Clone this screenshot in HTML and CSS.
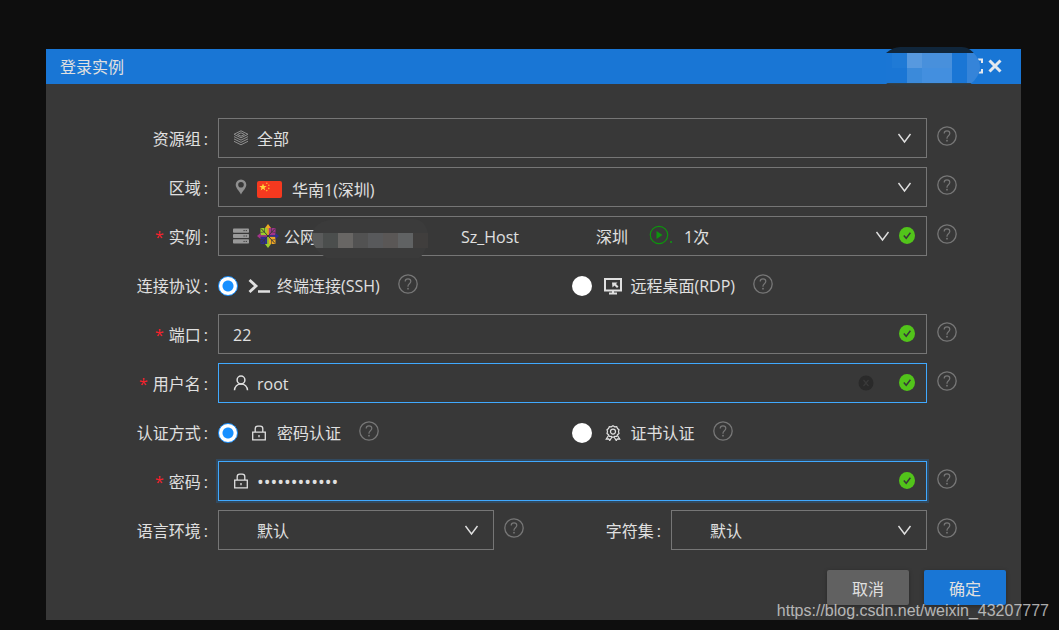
FILE: index.html
```html
<!DOCTYPE html>
<html lang="zh-CN">
<head>
<meta charset="utf-8">
<meta name="viewport" content="width=device-width, initial-scale=1">
<title>登录实例</title>
<link rel="stylesheet" href="styles.css">
</head>
<body>
<svg class="sprite" width="0" height="0" aria-hidden="true">
  <symbol id="help" viewBox="0 0 20 20"><g fill="none" stroke="currentColor"><circle cx="10" cy="10" r="9.200" stroke-width="1.300"/><path d="M7.200 7.600C7.200 5.800 8.400 4.900 10 4.900s2.800 1 2.800 2.600c0 2.200-2.800 2.300-2.800 4.600v.6" stroke-width="1.200"/></g><circle cx="10" cy="14.700" r=".9" fill="currentColor"/></symbol>
  <symbol id="chevron" viewBox="0 0 20 20"><path d="M3.500 6l6 8 6-8" fill="none" stroke="currentColor" stroke-width="1.400"/></symbol>
  <symbol id="check" viewBox="0 0 16 17"><ellipse cx="8" cy="8.500" rx="8" ry="8.500" fill="#52c41a"/><path d="M4.800 8.500l2.400 2.800 4.200-5.600" fill="none" stroke="#383838" stroke-width="1.500"/></symbol>
  <symbol id="lock" viewBox="0 0 16 16"><path d="M1.700 7.200h12.600v7.600H1.700zM4.200 7V3.800C4.200 2.200 5.200 1.200 6.800 1.200h2.400c1.600 0 2.600 1 2.600 2.600V7M8 10v2.200" fill="none" stroke="currentColor" stroke-width="1.300"/></symbol>
</svg>

<main class="dialog">
  <header class="titlebar">
    <h1 class="title">登录实例</h1>
    <div class="tools">
      <button class="tool" type="button" aria-label="全屏"><svg width="16" height="16" viewBox="0 0 16 16"><path d="M1 5V1.500h4M11 1.500h4V5M15 11v3.500h-4M5 14.500H1V11" fill="none" stroke="currentColor" stroke-width="2"/></svg></button>
      <button class="tool" type="button" aria-label="关闭"><svg width="14" height="14" viewBox="0 0 14 14"><path d="M1.500 1.500l11 11M12.500 1.500l-11 11" stroke="currentColor" stroke-width="3"/></svg></button>
    </div>
    <svg class="title-mask" width="94" height="40" viewBox="0 0 94 40" aria-hidden="true">
      <clipPath id="tm"><path d="M0 6Q7 0 14 0H76C85 0 94 11 94 20S85 40 76 40H14Q5 40 0 36z"/></clipPath>
      <g clip-path="url(#tm)"><path fill="#10263b" d="M0 0h94v6H0z"/><path fill="#1a76d5" d="M0 6h94v30H0z"/><path fill="#1f7ad6" d="M6 6h15v15H6z"/><path fill="#5799df" d="M21 6h15v15H21z"/><path fill="#4890dc" d="M36 6h30v15H36z"/><path fill="#3b8ada" d="M21 21h15v15H21z"/><path fill="#438fdf" d="M36 21h30v15H36z"/><path fill="#3584d9" d="M81 6h13v30H81z"/><path fill="#31424d" d="M0 36h94v1H0z"/><path fill="#353a3d" d="M0 37h94v3H0z"/></g>
    </svg>
  </header>

  <form class="form">
    <div class="row">
      <label class="label" for="group">资源组<i>:</i></label>
      <div class="field">
        <select class="control with-icon" id="group"><option>全部</option></select>
        <div class="deco">
          <svg class="dim" width="16" height="16" viewBox="0 0 16 16"><g fill="none" stroke="currentColor" stroke-width="1"><path d="M8 .8l7 3.500-7 3.500-7-3.500z"/><path d="M8 2.800l3.500 1.700L8 6.200 4.500 4.500zM1 6.600l7 3.500 7-3.500M1 8.900l7 3.500 7-3.500M1 11.300l7 3.500 7-3.500"/></g></svg>
          <svg class="suffix" width="20" height="20"><use href="#chevron"/></svg>
        </div>
      </div>
      <svg class="help" width="20" height="20"><use href="#help"/></svg>
    </div>

    <div class="row">
      <label class="label" for="region">区域<i>:</i></label>
      <div class="field">
        <select class="control with-flag" id="region"><option>华南1(深圳)</option></select>
        <div class="deco">
          <svg class="dim" width="16" height="16" viewBox="0 0 16 16"><path fill="currentColor" fill-rule="evenodd" d="M8 .5a5.300 5.300 0 0 1 5.300 5.300c0 3.200-3.300 5.900-5.300 9.700C6 11.700 2.700 9 2.700 5.800A5.300 5.300 0 0 1 8 .5zM8 3a2.800 2.800 0 1 0 0 5.600A2.800 2.800 0 0 0 8 3z"/></svg>
          <svg class="flag" width="25" height="17" viewBox="0 0 25 17"><rect width="25" height="17" rx="2" fill="#f5391f"/><path fill="#ffd43b" d="M6 2.500l1 2.600h2.700L7.500 6.800l.8 2.600L6 7.800 3.700 9.400l.8-2.600-2.200-1.700H5z"/><g fill="#ffb52e"><circle cx="9.800" cy="2.200" r=".8"/><circle cx="11.800" cy="4.200" r=".8"/><circle cx="11.800" cy="7.400" r=".8"/><circle cx="9.800" cy="9.600" r=".8"/></g></svg>
          <svg class="suffix" width="20" height="20"><use href="#chevron"/></svg>
        </div>
      </div>
      <svg class="help" width="20" height="20"><use href="#help"/></svg>
    </div>

    <div class="row">
      <label class="label" for="instance"><b>*</b>实例<i>:</i></label>
      <div class="field">
        <select class="control with-logo" id="instance"><option>公网</option></select>
        <div class="meta"><span class="host">Sz_Host</span><span class="city">深圳</span><span class="state"><svg width="20" height="20" viewBox="0 0 20 20"><circle cx="10" cy="10" r="8.700" fill="none" stroke="currentColor" stroke-width="1.200"/><path fill="currentColor" d="M7.500 6v8l6-4z"/></svg>.</span><span>1次</span></div>
        <div class="deco">
          <svg class="server" width="16" height="16" viewBox="0 0 16 16"><g fill="currentColor"><rect y=".5" width="16" height="4.200" rx=".8"/><rect y="5.900" width="16" height="4.200" rx=".8"/><rect y="11.300" width="16" height="4.200" rx=".8"/></g><path d="M10.500 2.600h3.500M10.500 8h3.500M10.500 13.400h3.500" stroke="#383838" stroke-dasharray="1.200 1"/></svg>
          <svg class="centos" width="22" height="24" viewBox="0 0 22 24"><path fill="#9ccd2a" d="M3.500 4H10.500v7.500h-7z"/><path fill="#a3338a" d="M11.500 4h7v7.500h-7z"/><path fill="#2f2d8c" d="M3.500 12.500h7V20h-7z"/><path fill="#efa724" d="M11.500 12.500h7V20h-7z"/><path d="M4 4.500l14 15M18 4.500l-14 15" stroke="#383838" stroke-width="1"/><path d="M7.500 4v4l-4 .5M14.500 4v4l4 .5M7.500 20v-4l-4-.5M14.500 20v-4l4-.5" fill="none" stroke="#383838" stroke-width=".6"/><path fill="#efa724" d="M11 0l3 4h-2.200v7h-1.600V4H8z"/><path fill="#9ccd2a" d="M11 24l3-4h-2.200v-7h-1.600v7H8z"/><path fill="#a3338a" d="M0 12l3.500-3v2.200H10v1.600H3.500V15z"/><path fill="#2f2d8c" d="M22 12l-3.500-3v2.200H12v1.600h6.500V15z"/></svg>
          <svg class="suffix" width="20" height="20"><use href="#chevron"/></svg>
          <svg class="ok" width="16" height="17"><use href="#check"/></svg>
        </div>
        <svg class="name-mask" width="127" height="40" viewBox="0 0 127 40" aria-hidden="true"><path fill="#3b3b3b" d="M10 4Q18 1 30 1h72c8 0 14 8 14 16s-2 18-9 23H15C6 35 0 28 0 17q1-8 10-13z"/><path fill="#5a5b5b" d="M0 15h11v15H4Q0 26 0 15z"/><path fill="#4b4e4d" d="M11 15h15v15H11z"/><path fill="#686664" d="M26 15h15v15H26z"/><path fill="#525252" d="M41 15h15v15H41z"/><path fill="#58595b" d="M56 15h15v15H56z"/><path fill="#5a5756" d="M71 15h15v15H71z"/><path fill="#606263" d="M86 15h15v15H86z"/><path fill="#403e3d" d="M101 15h15v15h-15z"/></svg>
      </div>
      <svg class="help" width="20" height="20"><use href="#help"/></svg>
    </div>

    <div class="row" role="radiogroup" aria-labelledby="proto">
      <span class="label" id="proto">连接协议<i>:</i></span>
      <div class="choices">
        <div class="choice">
          <input type="radio" name="proto" id="ssh" checked>
          <label for="ssh"><svg width="22" height="18" viewBox="0 0 22 18"><path d="M1.500 3l6.500 6-6.500 6" fill="none" stroke="currentColor" stroke-width="2.800"/><path d="M10 14.500h12" stroke="currentColor" stroke-width="2.500"/></svg>终端连接(SSH)</label>
          <svg class="help" width="20" height="20"><use href="#help"/></svg>
        </div>
        <div class="choice">
          <input type="radio" name="proto" id="rdp">
          <label for="rdp"><svg width="22" height="18" viewBox="0 0 22 18"><path d="M3 2h16v11.500H3z" fill="none" stroke="currentColor" stroke-width="2"/><path d="M7 16.500h8M11 13v4" stroke="currentColor" stroke-width="2"/><path fill="currentColor" d="M10 5.500h5.500L14 7l2.500 2.500-1.500 1.500-2.500-2.500-2 2z"/></svg>远程桌面(RDP)</label>
          <svg class="help" width="20" height="20"><use href="#help"/></svg>
        </div>
      </div>
    </div>

    <div class="row">
      <label class="label" for="port"><b>*</b>端口<i>:</i></label>
      <div class="field">
        <input class="control" id="port" type="text" value="22">
        <div class="deco"><svg class="suffix" width="16" height="17"><use href="#check"/></svg></div>
      </div>
      <svg class="help" width="20" height="20"><use href="#help"/></svg>
    </div>

    <div class="row">
      <label class="label" for="user"><b>*</b>用户名<i>:</i></label>
      <div class="field">
        <input class="control with-icon active" id="user" type="text" value="root">
        <div class="deco">
          <svg width="16" height="16" viewBox="0 0 16 16"><g fill="none" stroke="currentColor" stroke-width="1.500"><circle cx="8" cy="5" r="3.900"/><path d="M1.500 15.300C1.700 11.500 4.300 8.900 8 8.900s6.300 2.600 6.500 6.400"/></g></svg>
          <svg class="suffix clear" width="16" height="16" viewBox="0 0 16 16"><circle cx="8" cy="8" r="7.500" fill="#2a2a2a"/><path d="M5.500 5l5 6M10.500 5l-5 6" stroke="#3a3a3a" stroke-width="1.200"/></svg>
          <svg width="16" height="17"><use href="#check"/></svg>
        </div>
      </div>
      <svg class="help" width="20" height="20"><use href="#help"/></svg>
    </div>

    <div class="row" role="radiogroup" aria-labelledby="auth">
      <span class="label" id="auth">认证方式<i>:</i></span>
      <div class="choices">
        <div class="choice">
          <input type="radio" name="auth" id="pwd-auth" checked>
          <label for="pwd-auth"><svg width="22" height="16"><use href="#lock"/></svg>密码认证</label>
          <svg class="help" width="20" height="20"><use href="#help"/></svg>
        </div>
        <div class="choice">
          <input type="radio" name="auth" id="cert-auth">
          <label for="cert-auth"><svg width="22" height="16" viewBox="0 0 16 16"><g fill="none" stroke="currentColor" stroke-width="1.200"><path d="M8 .8l1.700 1 2-.1.800 1.800 1.500 1.200-.5 1.900.5 1.900-1.500 1.200-.8 1.800-2-.1-1.700 1-1.700-1-2 .1-.8-1.800L2 8.500l.5-1.900L2 4.700l1.500-1.200.8-1.800 2 .1z"/><circle cx="8" cy="6.600" r="2.500"/><path d="M3.500 10.500L1.300 14l2.400-.2 1 1.800L7 12M12.500 10.500l2.200 3.500-2.400-.2-1 1.800L9 12"/></g></svg>证书认证</label>
          <svg class="help" width="20" height="20"><use href="#help"/></svg>
        </div>
      </div>
    </div>

    <div class="row">
      <label class="label" for="password"><b>*</b>密码<i>:</i></label>
      <div class="field">
        <input class="control with-icon active focused" id="password" type="password" value="abcdefghijkl">
        <div class="deco">
          <svg width="16" height="16"><use href="#lock"/></svg>
          <svg class="suffix" width="16" height="17"><use href="#check"/></svg>
        </div>
      </div>
      <svg class="help" width="20" height="20"><use href="#help"/></svg>
    </div>

    <div class="row">
      <label class="label" for="locale">语言环境<i>:</i></label>
      <div class="field field-wide">
        <select class="control with-icon" id="locale"><option>默认</option></select>
        <div class="deco"><svg class="suffix" width="20" height="20"><use href="#chevron"/></svg></div>
      </div>
      <svg class="help" width="20" height="20"><use href="#help"/></svg>
      <label class="label label-second" for="charset">字符集<i>:</i></label>
      <div class="field field-narrow">
        <select class="control with-icon" id="charset"><option>默认</option></select>
        <div class="deco"><svg class="suffix" width="20" height="20"><use href="#chevron"/></svg></div>
      </div>
      <svg class="help" width="20" height="20"><use href="#help"/></svg>
    </div>
  </form>

  <footer class="actions">
    <button class="btn" type="button">取消</button>
    <button class="btn primary" type="button">确定</button>
  </footer>
</main>
<div class="watermark">https://blog.csdn.net/weixin_43207777</div>
</body>
</html>
```

FILE: styles.css
```css
* { box-sizing: border-box; }

body {
  position: relative;
  margin: 0;
  min-height: 100vh;
  padding: 49px 38px 10px 46px;
  background: #0e0e0e;
  color: #e0e0e0;
  font: 16px/24px "Open Sans", "Noto Sans CJK SC", sans-serif;
}

svg { flex: none; }
.sprite { position: absolute; }

.dialog { background: #383838; }

.titlebar {
  position: relative;
  display: flex;
  align-items: center;
  justify-content: space-between;
  height: 35px;
  padding: 0 19px 2px 14px;
  background: #1976d5;
}

.title { margin: 0; padding-top: 2px; font-size: 16px; font-weight: 400; }
.tools { display: flex; align-items: center; gap: 5px; }
.tool { display: flex; padding: 0; border: 0; background: none; color: #e4e8ee; }
.title-mask { position: absolute; top: -2px; right: 41px; }

.form {
  display: flex;
  flex-direction: column;
  gap: 9px;
  padding: 34px 64px 20px 0;
}

.row { display: flex; align-items: center; min-height: 40px; }

.label { flex: none; width: 172px; padding: 2px 10px 0 0; text-align: right; }
.label i { margin-left: 3px; font-style: normal; }
.label b { margin-right: 5px; color: #f5222d; font-weight: 400; }
.label-second { width: 147px; }

.field { position: relative; display: grid; flex: 1; min-width: 0; }
.field > * { grid-area: 1 / 1; min-width: 0; }
.field-wide { flex: 276; }
.field-narrow { flex: 256; }

.control {
  width: 100%;
  height: 40px;
  margin: 0;
  padding: 2px 14px 0;
  border: 1px solid #767676;
  border-radius: 0;
  outline: 0;
  appearance: none;
  background: transparent;
  color: inherit;
  font: inherit;
}
.with-icon { padding-left: 38px; }
.with-flag { padding-top: 5px; padding-left: 73px; }
.with-logo { padding-left: 65px; }
.active { border-color: #40a9ff; }
.focused { box-shadow: 0 0 0 2px rgba(24, 144, 255, 0.2); }
input[type="password"] { font-size: 18px; }

.deco {
  display: flex;
  align-items: center;
  padding: 0 12px 1px 15px;
  pointer-events: none;
}
.suffix { margin-left: auto; }
.dim { color: #8f8f8f; }
.flag { margin: 6px 0 0 8px; }
.server { color: #999; }
.centos { margin-left: 8px; }
.ok { margin-left: 6px; }
.clear { margin-right: 25px; }

.meta { display: flex; align-items: center; padding: 2px 0 0 243px; pointer-events: none; }
.host { width: 135px; }
.city { width: 53px; }
.state { display: flex; width: 35px; color: #0d950d; }
.name-mask { position: absolute; top: 2px; left: 94px; pointer-events: none; }

.help { margin: 0 0 4px 10px; color: #777; }

.choices { display: grid; flex: 1; grid-template-columns: 1fr 1fr; margin-right: 32px; }
.choice { display: flex; align-items: center; padding-top: 2px; }
.choice + .choice { margin-right: -32px; }
.choice input {
  width: 20px;
  height: 20px;
  margin: 0 10px 0 0;
  border-radius: 50%;
  appearance: none;
  background: #fff;
}
.choice input:checked {
  border: 1px solid #1890ff;
  background: radial-gradient(circle, #1890ff 5px, #fff 6px);
}
.choice label { display: flex; align-items: center; gap: 7px; }
.choice .help { margin-left: 18px; }

.actions { display: flex; justify-content: flex-end; gap: 15px; padding: 0 15px 15px; }
.btn {
  width: 82px;
  height: 35px;
  padding: 2px 0 0;
  border: 0;
  border-radius: 2px;
  background: #616161;
  box-shadow: 0 1px 4px rgba(0, 0, 0, 0.3);
  color: #e0e0e0;
  font: inherit;
}
.primary { background: #1976d5; }

.watermark {
  position: absolute;
  right: 10px;
  bottom: 7px;
  color: rgba(225, 225, 225, 0.75);
  font-family: "Liberation Sans", sans-serif;
  pointer-events: none;
}
```
